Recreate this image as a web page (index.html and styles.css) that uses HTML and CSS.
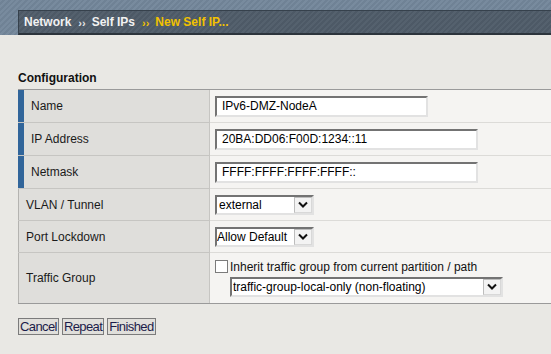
FILE: index.html
```html
<!DOCTYPE html>
<html>
<head>
<meta charset="utf-8">
<link rel="stylesheet" href="styles.css">
</head>
<body>
<header class="top">
  <nav class="crumbs">
    <span class="crumb">Network</span>
    <span class="sep">››</span>
    <span class="crumb">Self IPs</span>
    <span class="sep cur">››</span>
    <span class="crumb cur">New Self IP...</span>
  </nav>
</header>
<main class="page">
  <h2 class="section-title">Configuration</h2>
  <div class="form">
    <div class="row r-in">
      <div class="label req">Name</div>
      <div class="value"><input class="text w-name" type="text" value="IPv6-DMZ-NodeA"></div>
    </div>
    <div class="row r-in">
      <div class="label req">IP Address</div>
      <div class="value"><input class="text w-ip" type="text" value="20BA:DD06:F00D:1234::11"></div>
    </div>
    <div class="row r-in">
      <div class="label req">Netmask</div>
      <div class="value"><input class="text w-ip" type="text" value="FFFF:FFFF:FFFF:FFFF::"></div>
    </div>
    <div class="row r-sel">
      <div class="label">VLAN / Tunnel</div>
      <div class="value">
        <div class="select w-sel"><select><option>external</option></select><span class="arrow"><svg viewBox="0 0 16 15" width="16" height="15"><path d="M4 5.5 L8 9.5 L12 5.5" fill="none" stroke="#111" stroke-width="2"/></svg></span></div>
      </div>
    </div>
    <div class="row r-sel">
      <div class="label">Port Lockdown</div>
      <div class="value">
        <div class="select w-sel"><select class="tight"><option>Allow Default</option></select><span class="arrow"><svg viewBox="0 0 16 15" width="16" height="15"><path d="M4 5.5 L8 9.5 L12 5.5" fill="none" stroke="#111" stroke-width="2"/></svg></span></div>
      </div>
    </div>
    <div class="row r-tg">
      <div class="label">Traffic Group</div>
      <div class="value stack">
        <label class="check"><input class="cb" type="checkbox"><span>Inherit traffic group from current partition / path</span></label>
        <div class="select w-tg indent"><select class="tg"><option>traffic-group-local-only (non-floating)</option></select><span class="arrow"><svg viewBox="0 0 16 15" width="16" height="15"><path d="M4 5.5 L8 9.5 L12 5.5" fill="none" stroke="#111" stroke-width="2"/></svg></span></div>
      </div>
    </div>
  </div>
  <div class="buttons">
    <button class="btn">Cancel</button>
    <button class="btn">Repeat</button>
    <button class="btn">Finished</button>
  </div>
</main>
</body>
</html>
```

FILE: styles.css
```css
html, body {
  margin: 0;
  padding: 0;
  overflow: hidden;
}
body {
  background: #e9e8e4;
  font-family: "Liberation Sans", Arial, sans-serif;
  font-size: 12px;
  color: #1a1a1a;
}
.top {
  padding: 10px 0 0 18px;
  background-color: #73869a;
  background-image: repeating-linear-gradient(135deg, rgba(255,255,255,0.04) 0 2px, rgba(0,0,0,0.03) 2px 4px);
}
.crumbs {
  height: 22px;
  border-top: 1px solid #36414c;
  border-left: 1px solid #36414c;
  border-bottom: 2px solid #2c343c;
  background-color: #4f5c69;
  background-image: repeating-linear-gradient(135deg, rgba(255,255,255,0.03) 0 2px, rgba(0,0,0,0.03) 2px 4px);
  padding-left: 5px;
  display: flex;
  align-items: center;
  font-weight: bold;
  font-size: 12px;
  color: #f2f2f2;
}
.crumb { line-height: 14px; }
.sep {
  font-size: 11px;
  margin: 0 6px 0 7px;
  position: relative;
  top: 1px;
  color: #e6e6e6;
}
.cur { color: #f2c200; }
.page {
  padding-left: 18px;
}
.section-title {
  margin: 36px 0 4px;
  font-size: 12px;
  line-height: 14px;
  font-weight: bold;
  color: #111;
}
.form {
  border-top: 1px solid #9a9a9a;
  border-bottom: 1px solid #9a9a9a;
}
.row {
  display: grid;
  grid-template-columns: 192px 1fr;
}
.r-in { height: 33px; }
.r-sel { height: 32px; }
.r-tg { height: 50px; }
.label {
  box-sizing: border-box;
  display: flex;
  align-items: center;
  background: #dfdedb;
  border-right: 1px solid #c6c5c2;
  border-bottom: 1px solid #c6c5c2;
  padding-left: 8px;
  box-shadow: inset 1px 0 0 #b4b3b0;
  color: #1a1a1a;
}
.label.req {
  padding-left: 13px;
  box-shadow: inset 6px 0 0 #31659a;
}
.value {
  box-sizing: border-box;
  display: flex;
  align-items: center;
  background: #f5f4f2;
  border-bottom: 1px solid #dcdbd8;
  padding-left: 5px;
}
.r-tg .label, .r-tg .value { border-bottom: 0; }
.text {
  box-sizing: border-box;
  height: 21px;
  margin: 0;
  border-style: solid;
  border-width: 2px;
  border-color: #737373 #e2e2e2 #e2e2e2 #737373;
  background: #fff;
  padding: 0 5px;
  font-family: "Liberation Sans", Arial, sans-serif;
  font-size: 12px;
  color: #000;
  outline: none;
}
.w-name { width: 213px; }
.w-ip { width: 263px; }
.select {
  box-sizing: border-box;
  display: flex;
  height: 20px;
  border-style: solid;
  border-width: 2px;
  border-color: #737373 #e2e2e2 #e2e2e2 #737373;
  background: #fff;
}
.select select {
  appearance: none;
  -webkit-appearance: none;
  flex: 1;
  min-width: 0;
  border: 0;
  margin: 0;
  padding: 0 0 0 2px;
  background: transparent;
  font-family: "Liberation Sans", Arial, sans-serif;
  font-size: 12px;
  color: #000;
  outline: none;
}
.select select.tight { padding-left: 0; }
.select select.tg { padding-left: 1px; }
.arrow {
  box-sizing: border-box;
  width: 18px;
  display: flex;
  align-items: center;
  justify-content: center;
  background: #f3f3f3;
  border: 1px solid #bdbdbd;
  border-right-color: #d8d8d8;
  border-bottom-color: #d8d8d8;
}
.w-sel { width: 99px; }
.w-tg { width: 273px; }
.stack {
  flex-direction: column;
  align-items: flex-start;
  justify-content: center;
  gap: 3px;
}
.check {
  display: flex;
  align-items: center;
  gap: 2px;
  color: #111;
  line-height: 14px;
}
.cb {
  appearance: none;
  -webkit-appearance: none;
  box-sizing: border-box;
  width: 13px;
  height: 13px;
  margin: 0;
  border: 1px solid #7b7b7b;
  background: #fff;
}
.indent { margin-left: 15px; }
.buttons {
  display: flex;
  gap: 3px;
  margin-top: 14px;
}
.btn {
  box-sizing: border-box;
  height: 17px;
  margin: 0;
  padding: 0 1px;
  border: 1px solid #7b7b7b;
  background: #e0dfdb;
  font-family: "Liberation Sans", Arial, sans-serif;
  font-size: 13px;
  letter-spacing: -0.6px;
  line-height: 15px;
  color: #1c1c4a;
}
```
